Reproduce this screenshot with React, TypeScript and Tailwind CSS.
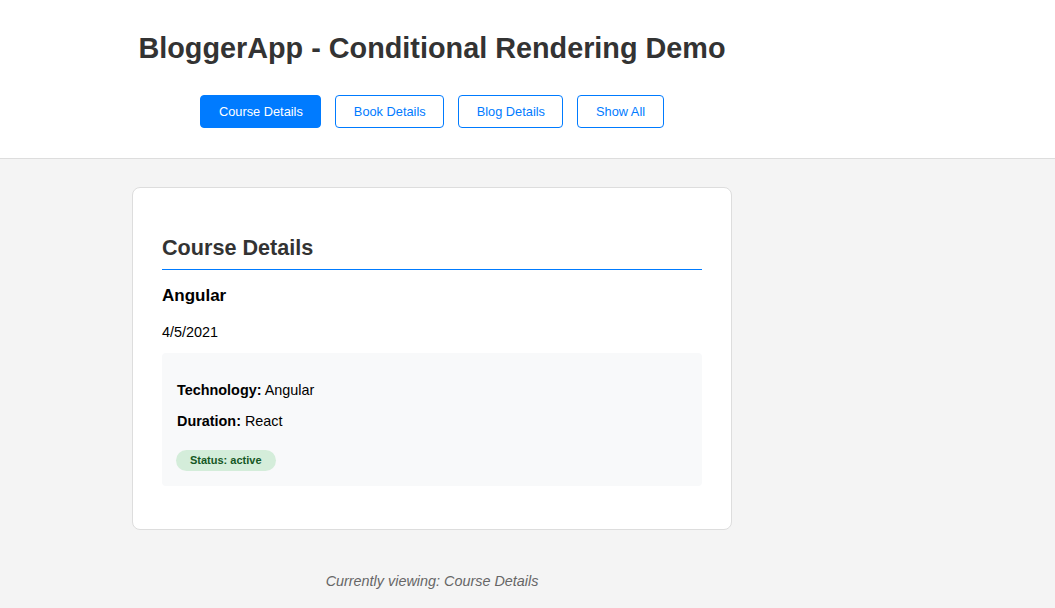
export default function App() {
  const tabs = ['Course Details', 'Book Details', 'Blog Details', 'Show All']
  const active = 'Course Details'

  return (
    <div className="min-h-[608px] bg-[#f4f4f4]" style={{ fontFamily: '"Liberation Sans", Arial, sans-serif' }}>
      {/* Header */}
      <header className="h-[159px] border-b border-[#dddddd] bg-white">
        <div className="ml-[132px] w-[600px] pt-[32px]">
          <h1 className="text-center text-[28.8px] leading-[33px] font-bold text-[#333333]">
            BloggerApp - Conditional Rendering Demo
          </h1>
          <div className="mt-[30px] flex justify-center gap-[14px]">
            {tabs.map(t => (
              <button
                key={t}
                className={
                  t === active
                    ? 'h-[33px] rounded-[4px] border border-[#007bff] bg-[#007bff] px-[17.5px] text-[12.8px] text-white'
                    : 'h-[33px] rounded-[4px] border border-[#007bff] bg-white px-[17.5px] text-[12.8px] text-[#007bff]'
                }
              >
                {t}
              </button>
            ))}
          </div>
        </div>
      </header>

      {/* Content */}
      <main className="ml-[132px] w-[600px] pt-[28px]">
        <div className="rounded-[8px] border border-[#dddddd] bg-white px-[29px] pt-[30px] pb-[43px]">
          <h2 className="mt-[17px] border-b border-[#007bff] pb-[8px] text-[21.6px] leading-[26px] font-bold text-[#333333]">
            Course Details
          </h2>
          <h3 className="mt-[16px] text-[17px] leading-[20px] font-bold text-black">Angular</h3>
          <p className="mt-[17px] text-[14.4px] leading-[18px] text-black">4/5/2021</p>
          <div className="mt-[12px] rounded-[4px] bg-[#f8f9fa] px-[15px] pt-[15px] pb-[15px]">
            <p className="mt-[13px] text-[14.4px] leading-[18px] text-black">
              <span className="font-bold">Technology:</span> Angular
            </p>
            <p className="mt-[13px] text-[14.4px] leading-[18px] text-black">
              <span className="font-bold">Duration:</span> React
            </p>
            <span className="-ml-px mt-[20px] inline-flex h-[21px] items-center rounded-full bg-[#d4edda] px-[14px] text-[11px] font-bold text-[#155724]">
              Status: active
            </span>
          </div>
        </div>
        <p className="mt-[42px] text-center text-[14.4px] leading-[18px] italic text-[#666666]">
          Currently viewing: Course Details
        </p>
      </main>
    </div>
  )
}
